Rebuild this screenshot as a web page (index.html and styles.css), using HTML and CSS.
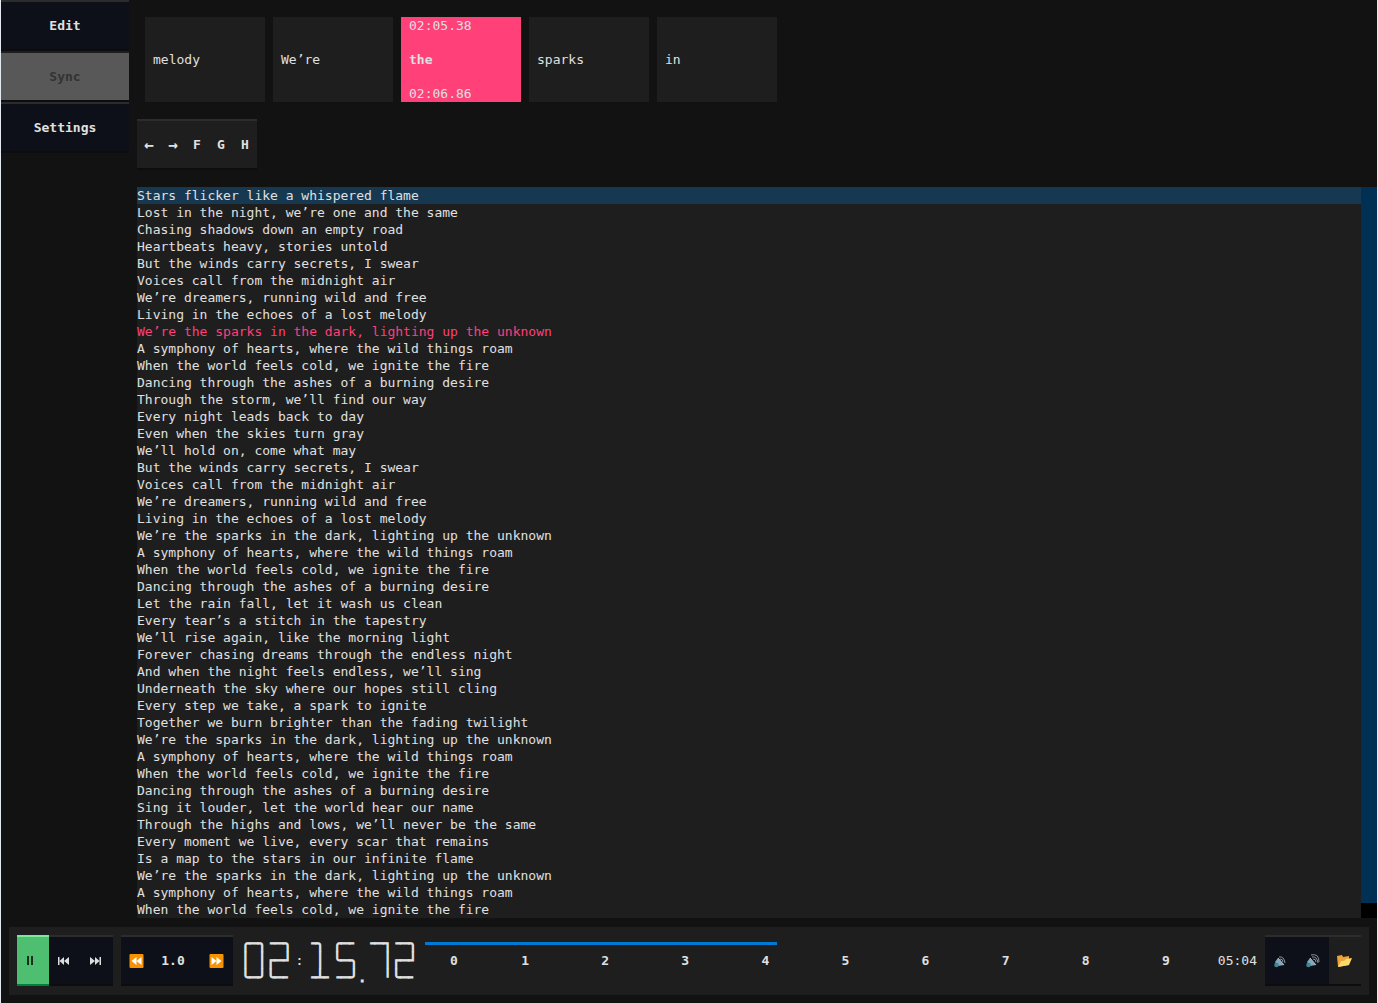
FILE: index.html
```html
<!DOCTYPE html>
<html lang="en">
<head>
<meta charset="utf-8">
<title>Lyrics sync</title>
<meta name="viewport" content="width=device-width, initial-scale=1">
<link rel="stylesheet" href="styles.css">
</head>
<body>
<div class="app">
  <div class="workspace">
    <nav class="sidebar" aria-label="Screens">
      <button class="key dark" type="button">Edit</button>
      <button class="key current" type="button" disabled>Sync</button>
      <button class="key dark" type="button">Settings</button>
    </nav>
    <main class="content">
      <div class="words">
        <div class="word">melody</div>
        <div class="word">We’re</div>
        <div class="word active"><time>02:05.38</time><strong>the</strong><time>02:06.86</time></div>
        <div class="word">sparks</div>
        <div class="word">in</div>
      </div>
      <div class="group shortcuts">
        <button class="key small arrow" type="button">←</button>
        <button class="key small arrow" type="button">→</button>
        <button class="key small" type="button">F</button>
        <button class="key small" type="button">G</button>
        <button class="key small" type="button">H</button>
      </div>
      <div class="lyrics">
        <ol class="lines">
          <li class="cursor">Stars flicker like a whispered flame</li>
          <li>Lost in the night, we’re one and the same</li>
          <li>Chasing shadows down an empty road</li>
          <li>Heartbeats heavy, stories untold</li>
          <li>But the winds carry secrets, I swear</li>
          <li>Voices call from the midnight air</li>
          <li>We’re dreamers, running wild and free</li>
          <li>Living in the echoes of a lost melody</li>
          <li class="playing">We’re the sparks in the dark, lighting up the unknown</li>
          <li>A symphony of hearts, where the wild things roam</li>
          <li>When the world feels cold, we ignite the fire</li>
          <li>Dancing through the ashes of a burning desire</li>
          <li>Through the storm, we’ll find our way</li>
          <li>Every night leads back to day</li>
          <li>Even when the skies turn gray</li>
          <li>We’ll hold on, come what may</li>
          <li>But the winds carry secrets, I swear</li>
          <li>Voices call from the midnight air</li>
          <li>We’re dreamers, running wild and free</li>
          <li>Living in the echoes of a lost melody</li>
          <li>We’re the sparks in the dark, lighting up the unknown</li>
          <li>A symphony of hearts, where the wild things roam</li>
          <li>When the world feels cold, we ignite the fire</li>
          <li>Dancing through the ashes of a burning desire</li>
          <li>Let the rain fall, let it wash us clean</li>
          <li>Every tear’s a stitch in the tapestry</li>
          <li>We’ll rise again, like the morning light</li>
          <li>Forever chasing dreams through the endless night</li>
          <li>And when the night feels endless, we’ll sing</li>
          <li>Underneath the sky where our hopes still cling</li>
          <li>Every step we take, a spark to ignite</li>
          <li>Together we burn brighter than the fading twilight</li>
          <li>We’re the sparks in the dark, lighting up the unknown</li>
          <li>A symphony of hearts, where the wild things roam</li>
          <li>When the world feels cold, we ignite the fire</li>
          <li>Dancing through the ashes of a burning desire</li>
          <li>Sing it louder, let the world hear our name</li>
          <li>Through the highs and lows, we’ll never be the same</li>
          <li>Every moment we live, every scar that remains</li>
          <li>Is a map to the stars in our infinite flame</li>
          <li>We’re the sparks in the dark, lighting up the unknown</li>
          <li>A symphony of hearts, where the wild things roam</li>
          <li>When the world feels cold, we ignite the fire</li>
        </ol>
        <div class="scrollbar"><div class="thumb"></div></div>
      </div>
    </main>
  </div>
  <footer class="player">
    <div class="group">
      <button class="key play" type="button" aria-label="Pause"><svg width="16" height="16" viewBox="0 0 16 16"><path d="M2 3h2v9H2zM6 3h2v9H6z" fill="#14301d"/></svg></button>
      <button class="key dark icon" type="button" aria-label="Previous line"><svg width="16" height="16" viewBox="0 0 16 16"><path d="M1 4h1.5v8H1zM7 4v8L2.5 8zM12 4v8L7 8z" fill="#dedede"/></svg></button>
      <button class="key dark icon" type="button" aria-label="Next line"><svg width="16" height="16" viewBox="0 0 16 16"><path d="M1 4v8l5-4zM6 4v8l4.5-4zM10.500 4h1.500v8h-1.500z" fill="#dedede"/></svg></button>
    </div>
    <div class="group">
      <button class="key dark icon" type="button" aria-label="Slower"><svg width="16" height="16" viewBox="0 0 16 16"><rect x=".5" y="1" width="14" height="14" rx="1" fill="#f79200"/><path d="M7.500 4v8L2.500 8zM12.500 4v8l-5-4z" fill="#fff"/></svg></button>
      <button class="key dark speed" type="button">1.0</button>
      <button class="key dark icon" type="button" aria-label="Faster"><svg width="16" height="16" viewBox="0 0 16 16"><rect x=".5" y="1" width="14" height="14" rx="1" fill="#f79200"/><path d="M2.500 4v8l5-4zM7.500 4v8l5-4z" fill="#fff"/></svg></button>
    </div>
    <div class="clock" role="timer" aria-label="02:15.72">
<pre>╭─╮╶─╮
│ │┌─┘
╰─╯╰─╴</pre>
<span class="colon">:</span>
<pre>╶╮ ╭─╴ ╶─┐╶─╮
 │ ╰─╮   │┌─┘
╶┴╴╶─╯.  ╵╰─╴</pre>
    </div>
    <div class="timeline">
      <progress value="352" max="784" aria-label="Position"></progress>
      <div class="marks">
        <button type="button">0</button><button type="button">1</button><button type="button">2</button><button type="button">3</button><button type="button">4</button><button type="button">5</button><button type="button">6</button><button type="button">7</button><button type="button">8</button><button type="button">9</button>
      </div>
    </div>
    <time class="total">05:04</time>
    <div class="group">
      <button class="key dark icon" type="button" aria-label="Volume down"><svg width="16" height="16" viewBox="0 0 16 16"><path d="M2 9l3-4 6 7-6 1z" fill="#7fa9b8"/><path d="M5 5l6 7" stroke="#b4c4ca"/><circle cx="3.500" cy="12" r="2.300" fill="#3f8599"/><path d="M6 4q5-1 6 6M7 6q3 0 3 3" fill="none" stroke="#8b9298"/></svg></button>
      <button class="key dark icon" type="button" aria-label="Volume up"><svg width="16" height="16" viewBox="0 0 16 16"><path d="M2 9l3-4 6 7-6 1z" fill="#7fa9b8"/><path d="M5 5l6 7" stroke="#b4c4ca"/><circle cx="3.500" cy="12" r="2.300" fill="#3f8599"/><path d="M8 6q3 0 3 3M7 4q5-1 6 6M6 2q8-2 8 7" fill="none" stroke="#8b9298"/></svg></button>
      <button class="key icon" type="button" aria-label="Open file"><svg width="16" height="16" viewBox="0 0 16 16"><path d="M0 3l5-1 1 2 6-1v9L1 14z" fill="#eda23b"/><path d="M4 8q4 0 5-2l6-1-3 7-11 2z" fill="#ffd96b"/></svg></button>
    </div>
  </footer>
</div>
</body>
</html>
```
FILE: styles.css
```css
* { box-sizing: border-box; }

body {
  margin: 0;
  background: #121212;
  color: #e0e0e0;
  font: 13px/17px "DejaVu Sans Mono", monospace;
}

button {
  margin: 0;
  padding: 0;
  border: 0;
  background: none;
  color: inherit;
  font: inherit;
  font-weight: bold;
}

.app {
  display: flex;
  flex-direction: column;
  min-height: 100vh;
  border: solid #e4e8f0;
  border-width: 0 1px;
}

.workspace { display: flex; flex: 1; }

.sidebar {
  display: flex;
  flex-direction: column;
  width: 128px;
}

.key {
  display: flex;
  align-items: center;
  justify-content: center;
  height: 51px;
  border-top: 2px solid #2c2c2c;
  border-bottom: 2px solid #0d0d0d;
  background: #1e1e1e;
}
.dark { background: #0d1018; }
.current {
  border-top-color: #1e1e1e;
  background: #585858;
  color: #333;
}
.small { width: 24px; }
.arrow { font-size: 16px; }
.icon { width: 32px; }
.play {
  width: 32px;
  border-top-color: #7ae998;
  border-bottom-color: #008139;
  background: #4ebf71;
}
.speed { width: 48px; padding-right: 8px; }

.group { display: flex; }

.content {
  display: flex;
  flex: 1;
  flex-direction: column;
  gap: 17px;
  min-width: 0;
  padding: 17px 0 0 8px;
}

.words { display: flex; gap: 8px; padding-left: 8px; }
.word {
  display: flex;
  flex-direction: column;
  justify-content: center;
  width: 120px;
  height: 85px;
  padding: 0 8px;
  background: #1e1e1e;
}
.active { justify-content: space-between; background: #ff4079; }

.lyrics { display: flex; flex: 1; }
.lines {
  flex: 1;
  margin: 0;
  padding: 0;
  background: #1e1e1e;
  list-style: none;
}
.cursor { background: #163851; }
.playing { color: #ff4079; }

.scrollbar { width: 16px; background: #000; }
.thumb { height: 98%; background: #003054; }

.player {
  display: flex;
  gap: 8px;
  margin: 9px 8px 8px;
  padding: 8px 8px 9px;
  background: #1e1e1e;
}

.clock {
  display: flex;
  width: 176px;
  font-size: 14px;
}
.clock pre {
  margin: 0;
  font: inherit;
  -webkit-text-stroke: 1px #e0e0e0;
}
.colon { width: 16px; line-height: 51px; text-align: center; }

.timeline { flex: 1; padding-top: 7px; }
progress {
  display: block;
  width: 100%;
  height: 3px;
  appearance: none;
}
progress::-webkit-progress-bar { background: transparent; }
progress::-webkit-progress-value { background: #0178d4; }
.marks {
  display: grid;
  grid-template-columns: 58px repeat(9, 1fr);
  column-gap: 4px;
  padding: 7px 6px 0 0;
}

.total { line-height: 51px; }
```
